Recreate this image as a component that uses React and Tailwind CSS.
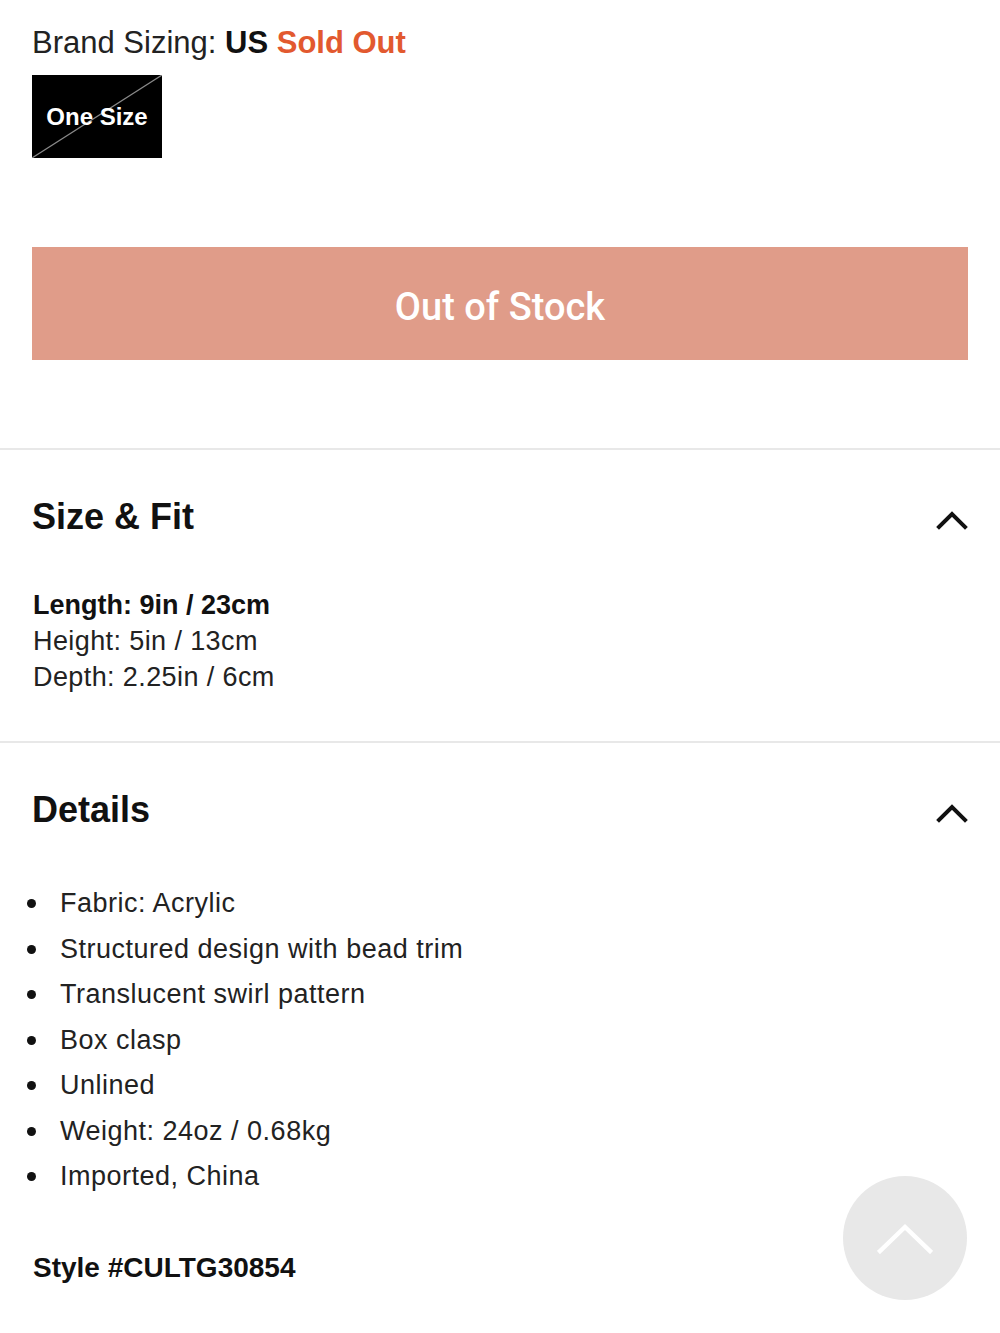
import React from 'react';

const details = [
    'Fabric: Acrylic',
    'Structured design with bead trim',
    'Translucent swirl pattern',
    'Box clasp',
    'Unlined',
    'Weight: 24oz / 0.68kg',
    'Imported, China',
];

function Chevron({ className }) {
    return (
        <svg viewBox="0 0 32 20" className={className} fill="none" stroke="currentColor" strokeWidth="4" strokeLinecap="square">
            <path d="M3 17 L16 4 L29 17" />
        </svg>
    );
}

function SectionHeader({ title }) {
    return (
        <div className="flex items-center justify-between px-[32px]">
            <h2 className="text-[36px] leading-[40px] font-bold text-[#111]">{title}</h2>
            <Chevron className="w-[32px] h-[20px] text-[#111] mt-[6px]" />
        </div>
    );
}

export default function App() {
    return (
        <div className="relative min-h-[1333px] w-full bg-white text-[#1c1c1c]" style={{ fontFamily: '"Liberation Sans", Arial, sans-serif' }}>
            {/* Size picker */}
            <div className="px-[32px] pt-[25px]">
                <p className="text-[31px] leading-[36px] text-[#222]">
                    Brand Sizing: <span className="font-bold text-[#111]">US</span>{' '}
                    <span className="font-bold text-[#e2592f]">Sold Out</span>
                </p>
                <div className="relative mt-[14px] w-[130px] h-[83px] bg-black flex items-center justify-center overflow-hidden">
                    <svg className="absolute inset-0 w-full h-full" viewBox="0 0 130 83" preserveAspectRatio="none">
                        <line x1="0" y1="83" x2="130" y2="0" stroke="#8a8a8a" strokeWidth="1.2" />
                    </svg>
                    <span className="relative text-white font-bold text-[24px] leading-none">One Size</span>
                </div>
            </div>

            <div className="px-[32px] mt-[89px]">
                <button className="w-full h-[113px] pt-[8px] bg-[#e09c89] text-white text-[38px] font-medium flex items-center justify-center" style={{ fontFamily: 'Roboto, "Liberation Sans", sans-serif' }}>
                    Out of Stock
                </button>
            </div>

            {/* Size & Fit */}
            <div className="mt-[88px] border-t-2 border-[#e8e8e8] pt-[47px] pb-[46px]">
                <SectionHeader title="Size & Fit" />
                <div className="px-[33px] mt-[50px] text-[27px] leading-[36px] tracking-[0.4px] text-[#222]">
                    <p className="font-bold tracking-normal text-[#111]">Length: 9in / 23cm</p>
                    <p>Height: 5in / 13cm</p>
                    <p>Depth: 2.25in / 6cm</p>
                </div>
            </div>

            {/* Details */}
            <div className="border-t-2 border-[#e8e8e8] pt-[47px]">
                <SectionHeader title="Details" />
                <ul className="mt-[51px] text-[27px] leading-[45.5px] tracking-[0.5px] text-[#222]">
                    {details.map((item) => (
                        <li key={item} className="flex items-center">
                            <span className="w-[60px] flex justify-start pl-[27px]">
                                <span className="w-[9px] h-[9px] rounded-full bg-[#111]"></span>
                            </span>
                            <span>{item}</span>
                        </li>
                    ))}
                </ul>
                <p className="px-[33px] mt-[50px] text-[28px] leading-[36px] font-bold text-[#111]">Style #CULTG30854</p>
            </div>

            {/* Back to top */}
            <button className="absolute left-[843px] top-[1176px] w-[124px] h-[124px] rounded-full bg-[#e8e8e8] flex items-center justify-center">
                <svg viewBox="0 0 56 32" className="w-[56px] h-[32px]" fill="none" stroke="white" strokeWidth="4.5" strokeLinecap="square">
                    <path d="M3 29 L28 5 L53 29" />
                </svg>
            </button>
        </div>
    );
}
